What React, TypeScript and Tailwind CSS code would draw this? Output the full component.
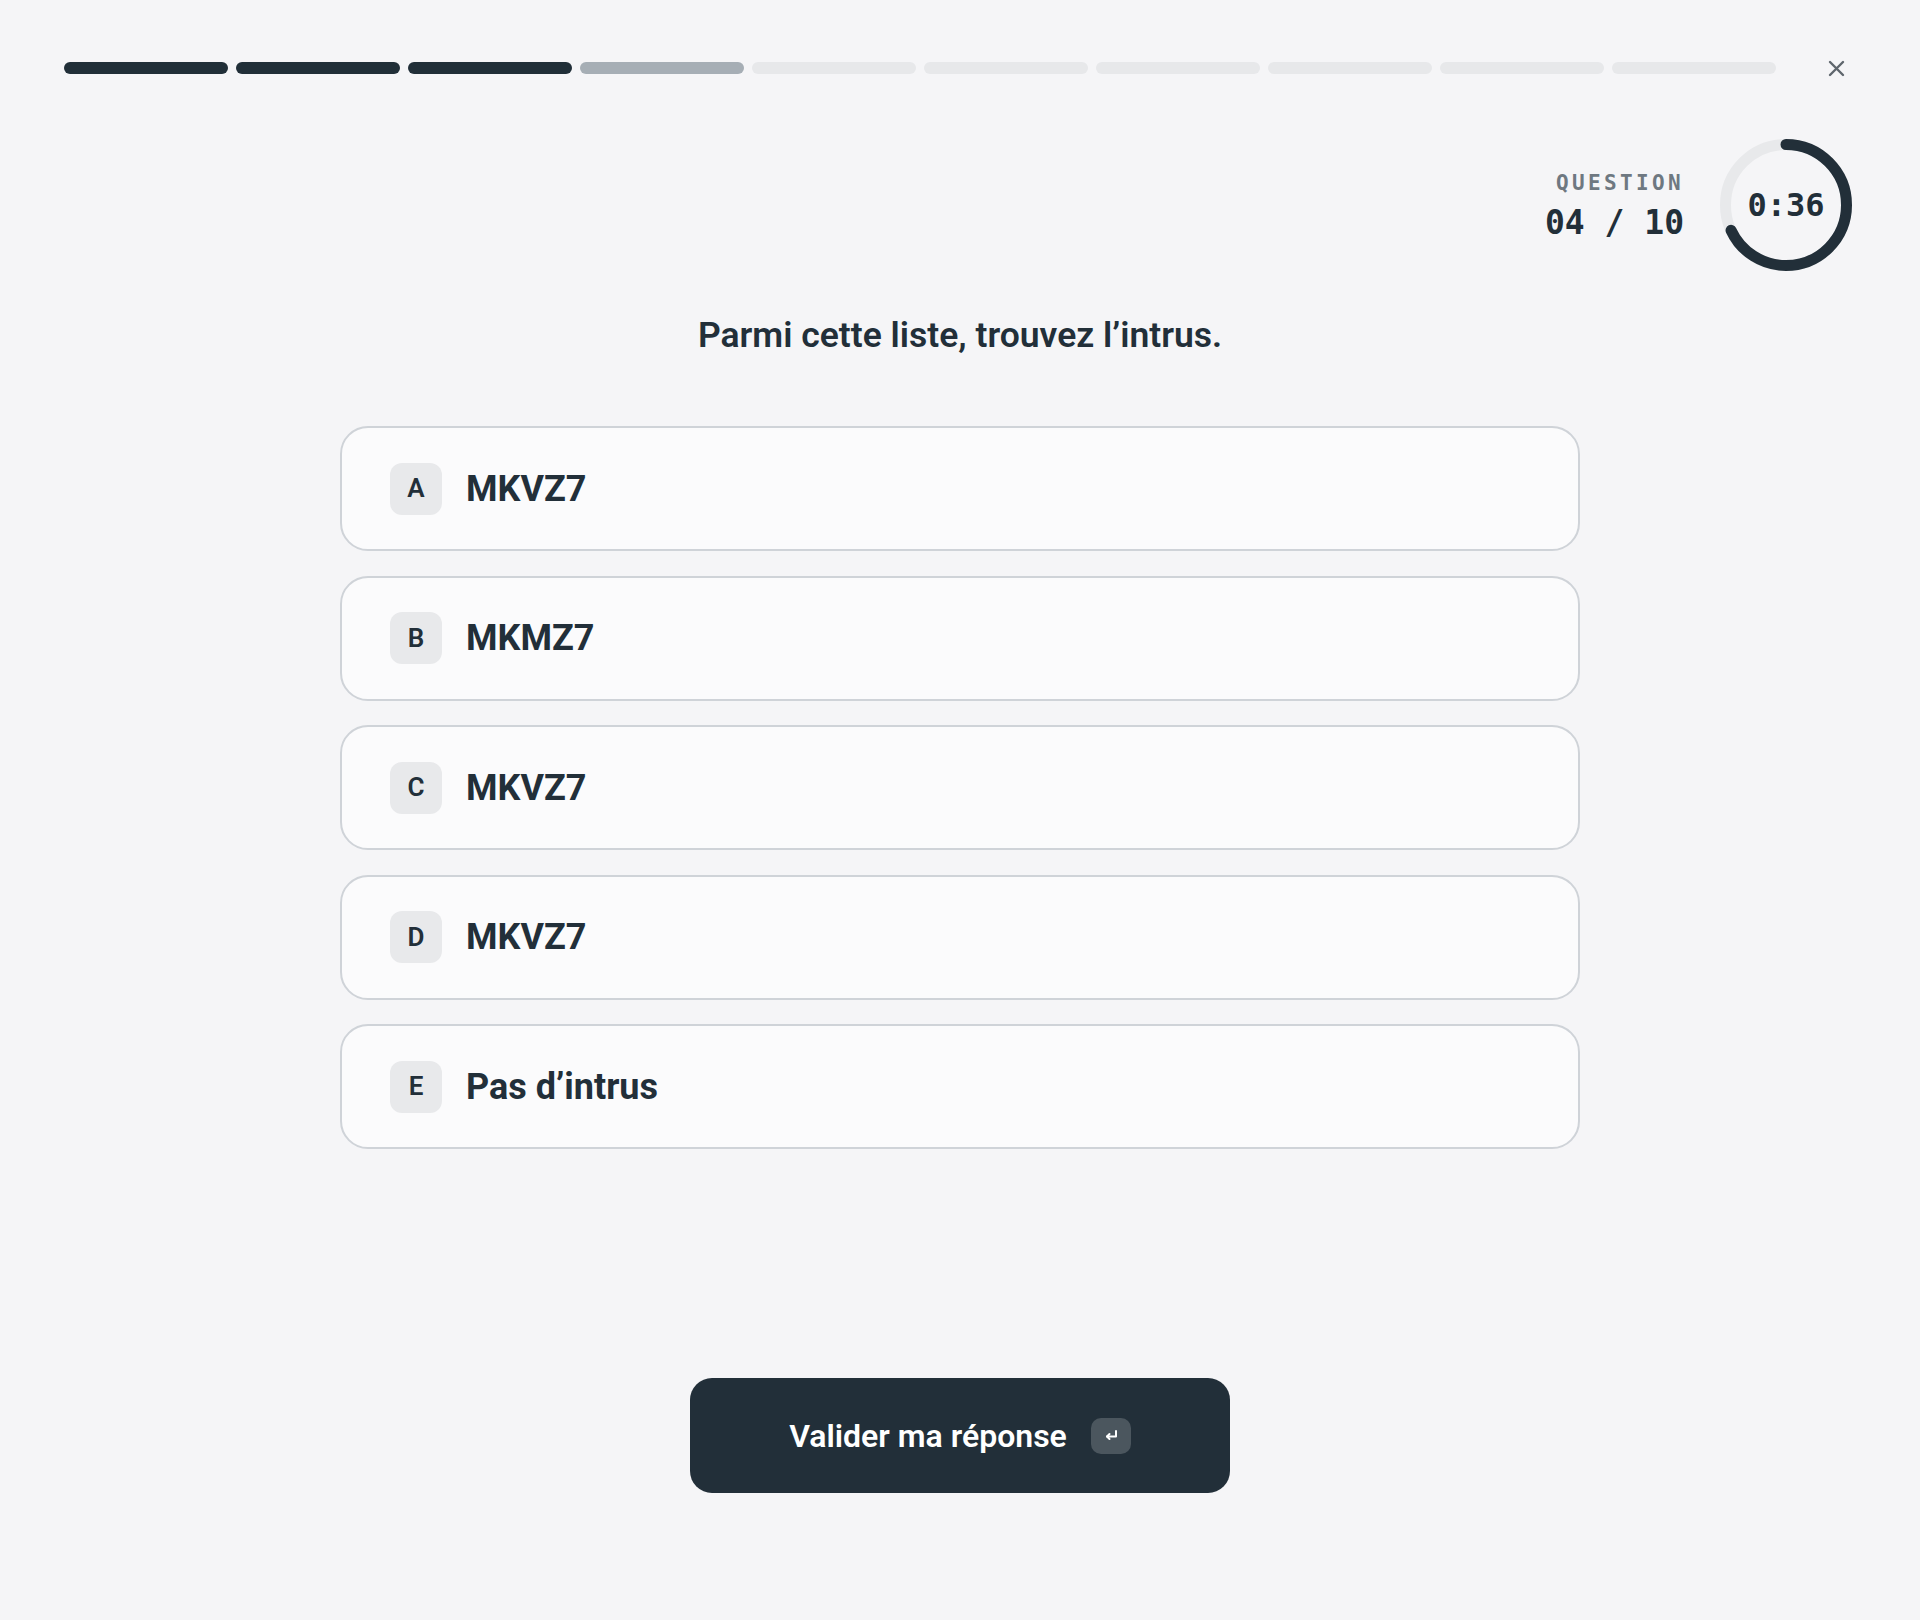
import React from 'react';

const TOTAL = 10;
const CURRENT = 4;

const options = [
  { key: 'A', label: 'MKVZ7' },
  { key: 'B', label: 'MKMZ7' },
  { key: 'C', label: 'MKVZ7' },
  { key: 'D', label: 'MKVZ7' },
  { key: 'E', label: 'Pas d’intrus' },
];

const Timer: React.FC<{ ratio: number; label: string }> = ({ ratio, label }) => {
  const r = 60.5;
  const c = 2 * Math.PI * r;
  return (
    <div className="relative w-[132px] h-[132px]">
      <svg width="132" height="132" viewBox="0 0 132 132" className="absolute inset-0 -rotate-90">
        <circle cx="66" cy="66" r={r} fill="none" stroke="#e8e9eb" strokeWidth="11" />
        <circle
          cx="66"
          cy="66"
          r={r}
          fill="none"
          stroke="#222f39"
          strokeWidth="11"
          strokeLinecap="round"
          strokeDasharray={`${c * ratio} ${c}`}
        />
      </svg>
      <div className="absolute inset-0 flex items-center justify-center font-['DejaVu_Sans_Mono',monospace] text-[32px] font-bold text-[#222f39]">
        {label}
      </div>
    </div>
  );
};

export default function App() {
  return (
    <div className="min-h-[1620px] w-full bg-[#f5f5f7] font-['Roboto',sans-serif] text-[#222f39]">
      <div className="flex flex-col px-16 pt-12">
        {/* Progress */}
        <div className="flex h-10 items-center">
          <div className="flex flex-1 gap-2">
            {Array.from({ length: TOTAL }).map((_, i) => (
              <div
                key={i}
                className={`h-3 flex-1 rounded-full ${
                  i < CURRENT - 1 ? 'bg-[#212f38]' : i === CURRENT - 1 ? 'bg-[#a6aeb5]' : 'bg-[#e7e8ea]'
                }`}
              />
            ))}
          </div>
          <button className="ml-10 flex h-10 w-10 items-center justify-center">
            <svg width="17" height="17" viewBox="0 0 17 17">
              <path d="M2 2 L15 15 M15 2 L2 15" stroke="#5f666d" strokeWidth="2.4" strokeLinecap="round" />
            </svg>
          </button>
        </div>

        {/* Question counter + timer */}
        <div className="mt-[51px] flex items-center justify-end gap-9 pr-1">
          <div className="flex flex-col items-end font-['DejaVu_Sans_Mono',monospace]">
            <span className="mb-[9px] text-[21px] leading-[26px] font-bold tracking-[0.16em] text-[#6e7881]">QUESTION</span>
            <span className="text-[33px] leading-[36px] font-bold text-[#222f39]">04 / 10</span>
          </div>
          <Timer ratio={0.68} label="0:36" />
        </div>

        <h1 className="mt-[42px] text-center text-[35.5px] leading-[44px] font-semibold">
          Parmi cette liste, trouvez l’intrus.
        </h1>

        {/* Options */}
        <div className="mx-auto mt-[69px] flex w-[1240px] flex-col gap-[24.5px]">
          {options.map((o) => (
            <div
              key={o.key}
              className="flex h-[125px] items-center gap-6 rounded-[28px] border-2 border-[#cfd3d8] bg-[#fbfbfc] pl-12"
            >
              <div className="flex h-[52px] w-[52px] items-center justify-center rounded-xl bg-[#e8e9eb] text-[26px] font-semibold">
                {o.key}
              </div>
              <span className="text-[36px] font-bold">{o.label}</span>
            </div>
          ))}
        </div>

        {/* Submit */}
        <div className="mt-[229px] flex justify-center">
          <button className="flex h-[115px] w-[540px] items-center justify-center gap-6 rounded-[22px] bg-[#222f39] text-[32px] font-semibold text-white">
            <span>Valider ma réponse</span>
            <span className="flex h-9 w-10 items-center justify-center rounded-[10px] bg-[#4b565e]">
              <svg width="14" height="11" viewBox="0 0 14 11">
                <path d="M12 1 V6.5 H3" fill="none" stroke="white" strokeWidth="2" strokeLinecap="round" strokeLinejoin="round" />
                <path d="M5.5 4 L3 6.5 L5.5 9" fill="none" stroke="white" strokeWidth="2" strokeLinecap="round" strokeLinejoin="round" />
              </svg>
            </span>
          </button>
        </div>
      </div>
    </div>
  );
}
